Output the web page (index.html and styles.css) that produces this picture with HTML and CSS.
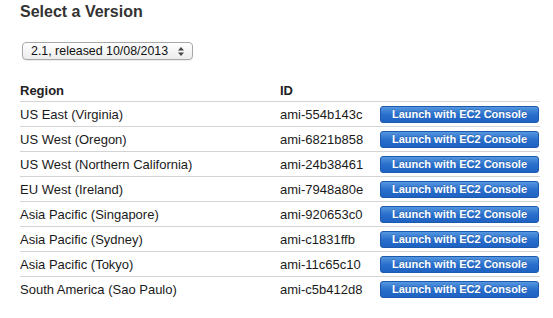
FILE: index.html
```html
<!DOCTYPE html>
<html>
  <head>
    <link rel="stylesheet" href="styles.css">
  </head>
  <body>
    <h1 class="title">Select a Version</h1>
    <div class="version-select">
      <span>2.1, released 10/08/2013</span>
      <svg class="arrows" width="6" height="9" viewBox="0 0 6 9">
        <path d="M3 0 L6 3.5 L0 3.5 Z M3 9 L6 5.5 L0 5.5 Z" fill="#444"/>
      </svg>
    </div>
    <table class="amis">
      <thead>
        <tr><th class="col-region">Region</th><th class="col-id">ID</th><th></th></tr>
      </thead>
      <tbody>
        <tr><td>US East (Virginia)</td><td>ami-554b143c</td><td><button class="launch">Launch with EC2 Console</button></td></tr>
        <tr><td>US West (Oregon)</td><td>ami-6821b858</td><td><button class="launch">Launch with EC2 Console</button></td></tr>
        <tr><td>US West (Northern California)</td><td>ami-24b38461</td><td><button class="launch">Launch with EC2 Console</button></td></tr>
        <tr><td>EU West (Ireland)</td><td>ami-7948a80e</td><td><button class="launch">Launch with EC2 Console</button></td></tr>
        <tr><td>Asia Pacific (Singapore)</td><td>ami-920653c0</td><td><button class="launch">Launch with EC2 Console</button></td></tr>
        <tr><td>Asia Pacific (Sydney)</td><td>ami-c1831ffb</td><td><button class="launch">Launch with EC2 Console</button></td></tr>
        <tr><td>Asia Pacific (Tokyo)</td><td>ami-11c65c10</td><td><button class="launch">Launch with EC2 Console</button></td></tr>
        <tr><td>South America (Sao Paulo)</td><td>ami-c5b412d8</td><td><button class="launch">Launch with EC2 Console</button></td></tr>
      </tbody>
    </table>
  </body>
</html>
```
FILE: styles.css
```css
body {
  margin: 0;
  padding: 3px 0 0 20px;
  background: #fff;
  color: #1a1a1a;
  font-family: "Liberation Sans", Arial, sans-serif;
}
.title {
  margin: 0;
  font-size: 16px;
  line-height: 18px;
  font-weight: bold;
  color: #333;
}
.version-select {
  display: flex;
  align-items: center;
  justify-content: space-between;
  box-sizing: border-box;
  width: 171px;
  height: 18px;
  margin: 21px 0 0 2px;
  padding: 0 8px 0 8px;
  border: 1px solid #a8a8a8;
  border-radius: 4px;
  background: linear-gradient(#ffffff, #ececec);
  box-shadow: 0 1px 1px rgba(0, 0, 0, 0.08);
  font-size: 12.4px;
  color: #111;
}
.arrows {
  display: block;
}
.amis {
  margin-top: 20px;
  width: 520px;
  border-collapse: collapse;
  font-size: 13px;
}
.amis th {
  height: 21px;
  padding: 0;
  text-align: left;
  font-weight: bold;
  color: #222;
  vertical-align: middle;
}
.col-region {
  width: 260px;
}
.col-id {
  width: 100px;
}
.amis tbody tr {
  border-top: 1px solid #d4d4d4;
}
.amis td {
  height: 24px;
  padding: 0;
  vertical-align: middle;
}
.launch {
  display: block;
  box-sizing: border-box;
  width: 159px;
  height: 17px;
  margin-top: 1px;
  padding: 0;
  border: 1px solid #1d59ad;
  border-radius: 3px;
  background: linear-gradient(#5597e0, #2a6fcc 50%, #1f62c2);
  color: #fff;
  font-family: "Liberation Sans", Arial, sans-serif;
  font-size: 11px;
  font-weight: bold;
  line-height: 15px;
  text-shadow: 0 -1px 0 rgba(0, 0, 0, 0.2);
  cursor: pointer;
}
```
